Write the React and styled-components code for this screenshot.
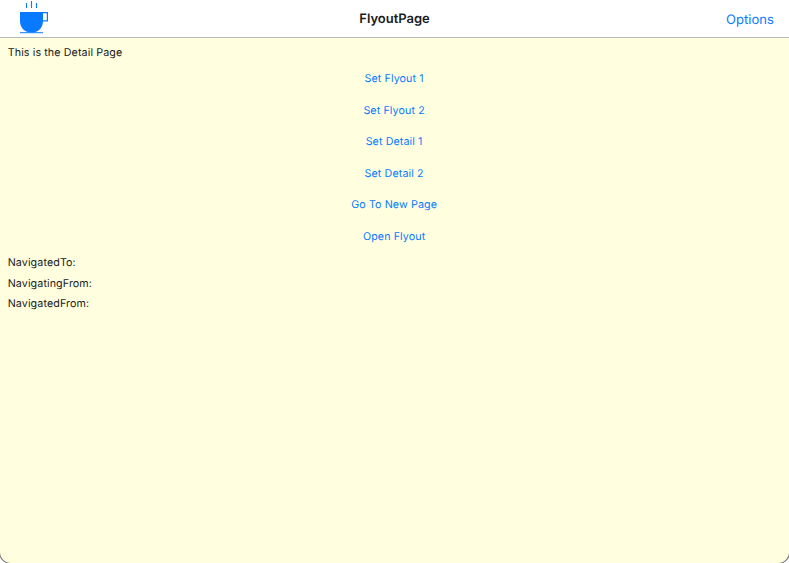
import React from "react";
import styled, { createGlobalStyle } from "styled-components";

const GlobalStyle = createGlobalStyle`
  * { box-sizing: border-box; }
  html, body { margin: 0; padding: 0; background: #fff; overflow: hidden; }
  body {
    font-family: Inter, "Liberation Sans", sans-serif;
    text-rendering: geometricPrecision;
    -webkit-font-smoothing: antialiased;
  }
  button { text-rendering: inherit; }
`;

const Window = styled.div`
  display: flex;
  flex-direction: column;
  width: 100vw;
  height: 563px;
  overflow: hidden;
  background: #fff;
`;

const Frame = styled.div`
  display: flex;
  flex-direction: column;
  flex: 1;
  overflow: hidden;
  border-radius: 0 0 11px 11px;
  background: #ffffe0;
  box-shadow: 0 0 0 1px #777, 1px 0 0 0 #333;
`;

const NavBar = styled.header`
  display: grid;
  grid-template-columns: 1fr auto 1fr;
  height: 38px;
  flex: none;
  background: #fff;
  border-bottom: 1px solid #b8b8b4;
`;

const IconButton = styled.button`
  justify-self: start;
  width: 30px;
  height: 34px;
  margin-left: 19px;
  padding: 0;
  border: 0;
  background: none;
  svg { display: block; }
`;

const Title = styled.h1`
  margin: 0;
  font-size: 13px;
  line-height: 38px;
  font-weight: 600;
  letter-spacing: -0.03px;
  color: #1b1b1b;
`;

const BarButton = styled.button`
  justify-self: end;
  margin-right: 15px;
  height: 40px;
  padding: 0;
  border: 0;
  background: none;
  font: 400 13px/40px Inter, sans-serif;
  letter-spacing: 0.06px;
  color: #087aff;
`;

const Detail = styled.main`
  display: flex;
  flex-direction: column;
  padding: 3.7px 7.7px;
`;

const Label = styled.p`
  margin: 0;
  height: 21px;
  font-size: 10.7px;
  line-height: 21px;
  letter-spacing: 0.11px;
  color: #20201c;
`;

const Actions = styled.div`
  display: flex;
  flex-direction: column;
  align-items: center;
  margin-right: 0.8px;
`;

const ActionButton = styled.button`
  height: 31.6px;
  padding: 0;
  border: 0;
  background: none;
  font: 400 10.7px/31px Inter, sans-serif;
  letter-spacing: 0.11px;
  color: #087aff;
`;

const Status = styled.div`
  display: grid;
  grid-auto-rows: 20.75px;
  margin-top: -0.3px;
`;

const actions = ["Set Flyout 1", "Set Flyout 2", "Set Detail 1", "Set Detail 2", "Go To New Page", "Open Flyout"];
const events = ["NavigatedTo:", "NavigatingFrom:", "NavigatedFrom:"];

const CoffeeIcon = () => (
  <svg width="30" height="34" viewBox="0 0 30 34" fill="none" stroke="#087aff">
    <path d="M7.5 3v5M12.5 1v7M17.5 3v5" strokeWidth="1.1" />
    <path d="M1 12h23v9c0 7-5 11.5-11.5 11.5S1 28 1 21z" fill="#087aff" stroke="none" />
    <path d="M23.5 12.6h4.9v8.2h-4.9" strokeWidth="1.2" />
    <path d="M1 32.7h23" strokeWidth="1" />
  </svg>
);

export default function App() {
  return (
    <>
      <GlobalStyle />
      <Window>
        <Frame>
          <NavBar>
            <IconButton aria-label="Open flyout"><CoffeeIcon /></IconButton>
            <Title>FlyoutPage</Title>
            <BarButton>Options</BarButton>
          </NavBar>
          <Detail>
            <Label>This is the Detail Page</Label>
            <Actions>
              {actions.map((name) => <ActionButton key={name}>{name}</ActionButton>)}
            </Actions>
            <Status>
              {events.map((name) => <Label key={name}>{name}</Label>)}
            </Status>
          </Detail>
        </Frame>
      </Window>
    </>
  );
}
